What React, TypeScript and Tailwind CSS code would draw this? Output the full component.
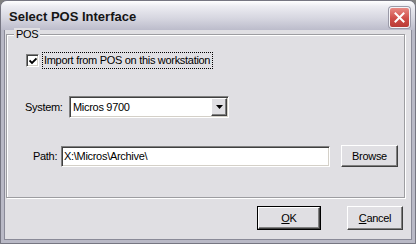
const raised =
  "bg-[#e0dfe3] border border-t-white border-l-white border-b-[#404040] border-r-[#404040] shadow-[inset_-1px_-1px_0_#808080]";
const sunken =
  "bg-white border border-t-[#808080] border-l-[#808080] border-b-white border-r-white shadow-[inset_1px_1px_0_#404040,inset_-1px_-1px_0_#d4d0c8]";

const CloseButton = () => (
  <div className="w-[21px] h-[21px] rounded-[3px] border border-[#f4f4f8] bg-[linear-gradient(to_bottom,#e88a84,#cf4d48_55%,#b93a36)] shadow-[0_0_0_1px_#9a9aa8] flex items-center justify-center">
    <svg width="11" height="11" viewBox="0 0 11 11">
      <path d="M1.5 1.5 L9.5 9.5 M9.5 1.5 L1.5 9.5" stroke="white" strokeWidth="2" strokeLinecap="square" />
    </svg>
  </div>
);

export default function App() {
  return (
    <div className="w-[416px] h-[244px] bg-[#808080] font-['Liberation_Sans',Arial,sans-serif] text-[11px] tracking-[-0.3px] text-black whitespace-nowrap">
      <div className="h-full flex flex-col rounded-t-[7px] border border-[#767682] bg-[#b9b9c6]">
        {/* title bar */}
        <div className="h-[29px] shrink-0 flex items-center justify-between pl-[8px] pr-[5px] pt-[3px] rounded-t-[6px] bg-[linear-gradient(to_bottom,#ffffff_0%,#ececf2_18%,#d6d6e0_60%,#bcbccb_100%)]">
          <span className="font-bold text-[13px] tracking-normal text-[#141414]">Select POS Interface</span>
          <CloseButton />
        </div>

        {/* client area */}
        <div className="flex-1 mx-[3px] mb-[3px] border border-t-0 border-[#8a8a98] bg-[#e0dfe3] flex flex-col">
          {/* group box */}
          <div className="relative mt-[4px] ml-[1px] mr-[6px] h-[164px] border border-[#9d9da1] shadow-[inset_1px_1px_0_#ffffff,1px_1px_0_#ffffff] flex flex-col">
            <span className="absolute -top-[7px] left-[7px] px-[2px] bg-[#e0dfe3] leading-[12px]">POS</span>

            <div className="mt-[17px] pl-[19px] h-[17px] flex items-center">
              <div className={`w-[13px] h-[13px] shrink-0 ${sunken} flex items-center justify-center`}>
                <svg width="8" height="8" viewBox="0 0 8 8">
                  <path d="M0.5 3.5 L3 6 L7.5 1.5" stroke="black" strokeWidth="1.8" fill="none" />
                </svg>
              </div>
              <div className="ml-[3px] w-[171px] h-[17px] shrink-0 border border-dotted border-black pl-[1px] flex items-center overflow-hidden">
                Import from POS on this workstation
              </div>
            </div>

            <div className="mt-[27px] pl-[18px] flex items-center">
              <span className="w-[44px]">System:</span>
              <div className={`w-[160px] h-[22px] ${sunken} flex items-center justify-between pl-[3px] pr-[1px]`}>
                <span>Micros 9700</span>
                <div className={`w-[16px] h-[18px] ${raised} flex items-center justify-center`}>
                  <svg width="7" height="4" viewBox="0 0 7 4">
                    <path d="M0 0 H7 L3.5 4 Z" fill="black" />
                  </svg>
                </div>
              </div>
            </div>

            <div className="mt-[27px] pl-[26px] flex items-center">
              <span className="w-[28px]">Path:</span>
              <div className={`w-[269px] h-[21px] ${sunken} flex items-center pl-[2px]`}>X:\Micros\Archive\</div>
              <button className={`ml-[11px] w-[57px] h-[22px] ${raised} flex items-center justify-center`}>Browse</button>
            </div>
          </div>

          {/* bottom buttons */}
          <div className="mt-[8px] pr-[8px] flex justify-end gap-[26px]">
            <button className="w-[64px] h-[24px] border border-black">
              <div className={`h-full ${raised} flex items-center justify-center`}>
                <span><span className="underline">O</span>K</span>
              </div>
            </button>
            <button className={`w-[56px] h-[24px] ${raised} flex items-center justify-center`}>
              <span><span className="underline">C</span>ancel</span>
            </button>
          </div>
        </div>
      </div>
    </div>
  );
}
